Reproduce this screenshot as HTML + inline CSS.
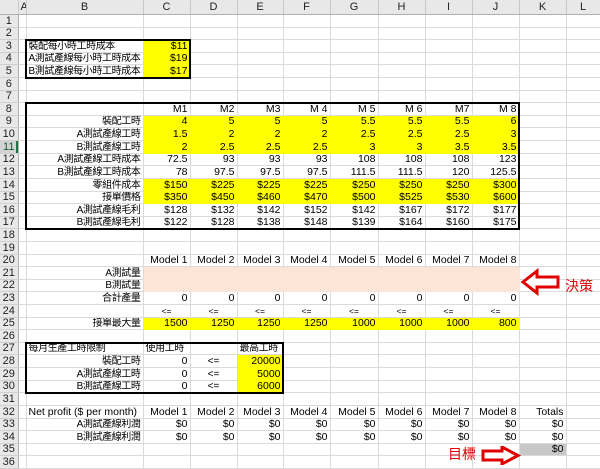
<!DOCTYPE html>
<html><head><meta charset="utf-8"><style>
body{margin:0;width:600px;height:465px;overflow:hidden;background:#fff;font-family:"Liberation Sans","Noto Sans CJK TC",sans-serif;font-size:10.5px;color:#000;position:relative}
table{border-collapse:collapse;table-layout:fixed;position:absolute;left:0;top:0;width:600px}
td{height:11.62px;padding:0 2px;border-right:1px solid #dadada;border-bottom:1px solid #dadada;white-space:nowrap;overflow:hidden;line-height:11px;text-align:right;vertical-align:bottom}
tr.h td{height:14px;background:#e8e8e8;text-align:center;vertical-align:middle;border-right:1px solid #c8c8c8;border-bottom:1px solid #b0b0b0;font-size:11px;color:#222}
td.n{background:#e8e8e8;text-align:center;border-right:1px solid #b0b0b0;border-bottom:1px solid #d0d0d0;color:#222;padding:0;font-size:11px}
td.sel{background:#d3d3d3;box-shadow:inset -2px 0 0 #217346;color:#185c37}
.y{background:#ffff00;border-color:#ffff00}
.p{background:#fce4d6;border-color:#fce4d6}
.g{background:#c8c8c8}
.l{text-align:left}
.c{text-align:center;font-size:8.5px}
.b{font-size:10px;letter-spacing:-0.4px}
.box{position:absolute;border:2px solid #000;box-sizing:border-box}
.red{position:absolute;color:#e00000;font-size:14px}
</style></head><body>
<table>
<colgroup><col style="width:18px"><col style="width:8px"><col style="width:117px"><col style="width:47px"><col style="width:47px"><col style="width:46px"><col style="width:47px"><col style="width:48px"><col style="width:47px"><col style="width:47px"><col style="width:47px"><col style="width:47px"><col style="width:34px"></colgroup>
<tr class="h"><td style="background:#e8e8e8"></td><td>A</td><td>B</td><td>C</td><td>D</td><td>E</td><td>F</td><td>G</td><td>H</td><td>I</td><td>J</td><td>K</td><td>L</td></tr>
<tr><td class="n">1</td><td></td><td></td><td></td><td></td><td></td><td></td><td></td><td></td><td></td><td></td><td></td><td></td></tr>
<tr><td class="n">2</td><td></td><td></td><td></td><td></td><td></td><td></td><td></td><td></td><td></td><td></td><td></td><td></td></tr>
<tr><td class="n">3</td><td></td><td class="l b">裝配每小時工時成本</td><td class="y">$11</td><td></td><td></td><td></td><td></td><td></td><td></td><td></td><td></td><td></td></tr>
<tr><td class="n">4</td><td></td><td class="l b">A測試產線每小時工時成本</td><td class="y">$19</td><td></td><td></td><td></td><td></td><td></td><td></td><td></td><td></td><td></td></tr>
<tr><td class="n">5</td><td></td><td class="l b">B測試產線每小時工時成本</td><td class="y">$17</td><td></td><td></td><td></td><td></td><td></td><td></td><td></td><td></td><td></td></tr>
<tr><td class="n">6</td><td></td><td></td><td></td><td></td><td></td><td></td><td></td><td></td><td></td><td></td><td></td><td></td></tr>
<tr><td class="n">7</td><td></td><td></td><td></td><td></td><td></td><td></td><td></td><td></td><td></td><td></td><td></td><td></td></tr>
<tr><td class="n">8</td><td></td><td></td><td>M1</td><td>M2</td><td>M3</td><td>M 4</td><td>M 5</td><td>M 6</td><td>M7</td><td>M 8</td><td></td><td></td></tr>
<tr><td class="n">9</td><td></td><td class="b">裝配工時</td><td class="y">4</td><td class="y">5</td><td class="y">5</td><td class="y">5</td><td class="y">5.5</td><td class="y">5.5</td><td class="y">5.5</td><td class="y">6</td><td></td><td></td></tr>
<tr><td class="n">10</td><td></td><td class="b">A測試產線工時</td><td class="y">1.5</td><td class="y">2</td><td class="y">2</td><td class="y">2</td><td class="y">2.5</td><td class="y">2.5</td><td class="y">2.5</td><td class="y">3</td><td></td><td></td></tr>
<tr><td class="n sel">11</td><td></td><td class="b">B測試產線工時</td><td class="y">2</td><td class="y">2.5</td><td class="y">2.5</td><td class="y">2.5</td><td class="y">3</td><td class="y">3</td><td class="y">3.5</td><td class="y">3.5</td><td></td><td></td></tr>
<tr><td class="n">12</td><td></td><td class="b">A測試產線工時成本</td><td>72.5</td><td>93</td><td>93</td><td>93</td><td>108</td><td>108</td><td>108</td><td>123</td><td></td><td></td></tr>
<tr><td class="n">13</td><td></td><td class="b">B測試產線工時成本</td><td>78</td><td>97.5</td><td>97.5</td><td>97.5</td><td>111.5</td><td>111.5</td><td>120</td><td>125.5</td><td></td><td></td></tr>
<tr><td class="n">14</td><td></td><td class="b">零組件成本</td><td class="y">$150</td><td class="y">$225</td><td class="y">$225</td><td class="y">$225</td><td class="y">$250</td><td class="y">$250</td><td class="y">$250</td><td class="y">$300</td><td></td><td></td></tr>
<tr><td class="n">15</td><td></td><td class="b">接單價格</td><td class="y">$350</td><td class="y">$450</td><td class="y">$460</td><td class="y">$470</td><td class="y">$500</td><td class="y">$525</td><td class="y">$530</td><td class="y">$600</td><td></td><td></td></tr>
<tr><td class="n">16</td><td></td><td class="b">A測試產線毛利</td><td>$128</td><td>$132</td><td>$142</td><td>$152</td><td>$142</td><td>$167</td><td>$172</td><td>$177</td><td></td><td></td></tr>
<tr><td class="n">17</td><td></td><td class="b">B測試產線毛利</td><td>$122</td><td>$128</td><td>$138</td><td>$148</td><td>$139</td><td>$164</td><td>$160</td><td>$175</td><td></td><td></td></tr>
<tr><td class="n">18</td><td></td><td></td><td></td><td></td><td></td><td></td><td></td><td></td><td></td><td></td><td></td><td></td></tr>
<tr><td class="n">19</td><td></td><td></td><td></td><td></td><td></td><td></td><td></td><td></td><td></td><td></td><td></td><td></td></tr>
<tr><td class="n">20</td><td></td><td></td><td>Model 1</td><td>Model 2</td><td>Model 3</td><td>Model 4</td><td>Model 5</td><td>Model 6</td><td>Model 7</td><td>Model 8</td><td></td><td></td></tr>
<tr><td class="n">21</td><td></td><td class="b">A測試量</td><td class="p"></td><td class="p"></td><td class="p"></td><td class="p"></td><td class="p"></td><td class="p"></td><td class="p"></td><td class="p"></td><td></td><td></td></tr>
<tr><td class="n">22</td><td></td><td class="b">B測試量</td><td class="p"></td><td class="p"></td><td class="p"></td><td class="p"></td><td class="p"></td><td class="p"></td><td class="p"></td><td class="p"></td><td></td><td></td></tr>
<tr><td class="n">23</td><td></td><td class="b">合計產量</td><td>0</td><td>0</td><td>0</td><td>0</td><td>0</td><td>0</td><td>0</td><td>0</td><td></td><td></td></tr>
<tr><td class="n">24</td><td></td><td></td><td class="c">&lt;=</td><td class="c">&lt;=</td><td class="c">&lt;=</td><td class="c">&lt;=</td><td class="c">&lt;=</td><td class="c">&lt;=</td><td class="c">&lt;=</td><td class="c">&lt;=</td><td></td><td></td></tr>
<tr><td class="n">25</td><td></td><td class="b">接單最大量</td><td class="y">1500</td><td class="y">1250</td><td class="y">1250</td><td class="y">1250</td><td class="y">1000</td><td class="y">1000</td><td class="y">1000</td><td class="y">800</td><td></td><td></td></tr>
<tr><td class="n">26</td><td></td><td></td><td></td><td></td><td></td><td></td><td></td><td></td><td></td><td></td><td></td><td></td></tr>
<tr><td class="n">27</td><td></td><td class="l b">每月生產工時限制</td><td class="l b">使用工時</td><td></td><td class="l b">最高工時</td><td></td><td></td><td></td><td></td><td></td><td></td><td></td></tr>
<tr><td class="n">28</td><td></td><td class="b">裝配工時</td><td>0</td><td class="c" style="font-size:10px">&lt;=</td><td class="y">20000</td><td></td><td></td><td></td><td></td><td></td><td></td><td></td></tr>
<tr><td class="n">29</td><td></td><td class="b">A測試產線工時</td><td>0</td><td class="c" style="font-size:10px">&lt;=</td><td class="y">5000</td><td></td><td></td><td></td><td></td><td></td><td></td><td></td></tr>
<tr><td class="n">30</td><td></td><td class="b">B測試產線工時</td><td>0</td><td class="c" style="font-size:10px">&lt;=</td><td class="y">6000</td><td></td><td></td><td></td><td></td><td></td><td></td><td></td></tr>
<tr><td class="n">31</td><td></td><td></td><td></td><td></td><td></td><td></td><td></td><td></td><td></td><td></td><td></td><td></td></tr>
<tr><td class="n">32</td><td></td><td class="l">Net profit ($ per month)</td><td>Model 1</td><td>Model 2</td><td>Model 3</td><td>Model 4</td><td>Model 5</td><td>Model 6</td><td>Model 7</td><td>Model 8</td><td>Totals</td><td></td></tr>
<tr><td class="n">33</td><td></td><td class="b">A測試產線利潤</td><td>$0</td><td>$0</td><td>$0</td><td>$0</td><td>$0</td><td>$0</td><td>$0</td><td>$0</td><td>$0</td><td></td></tr>
<tr><td class="n">34</td><td></td><td class="b">B測試產線利潤</td><td>$0</td><td>$0</td><td>$0</td><td>$0</td><td>$0</td><td>$0</td><td>$0</td><td>$0</td><td>$0</td><td></td></tr>
<tr><td class="n">35</td><td></td><td></td><td></td><td></td><td></td><td></td><td></td><td></td><td></td><td></td><td class="g">$0</td><td></td></tr>
<tr><td class="n">36</td><td></td><td></td><td></td><td></td><td></td><td></td><td></td><td></td><td></td><td></td><td></td><td></td></tr>
</table>
<div class="box" style="left:25px;top:39px;width:166px;height:40px"></div>
<div class="box" style="left:25px;top:102px;width:495px;height:128px"></div>
<div class="box" style="left:25px;top:342px;width:259px;height:52px"></div>
<svg style="position:absolute;left:520px;top:268px" width="42" height="28" viewBox="0 0 42 28"><path d="M3 14 L17 3 L17 9 L38 9 L38 19 L17 19 L17 25 Z" fill="#fff" stroke="#e00000" stroke-width="3" stroke-linejoin="miter"/></svg>
<div class="red" style="left:565px;top:276px">決策</div>
<svg style="position:absolute;left:480px;top:446px" width="42" height="19" viewBox="0 0 42 19"><path d="M3 5 L22 5 L22 1 L38 9.5 L22 18 L22 14 L3 14 Z" fill="#fff" stroke="#e00000" stroke-width="3"/></svg>
<div class="red" style="left:448px;top:444px">目標</div>
</body></html>
